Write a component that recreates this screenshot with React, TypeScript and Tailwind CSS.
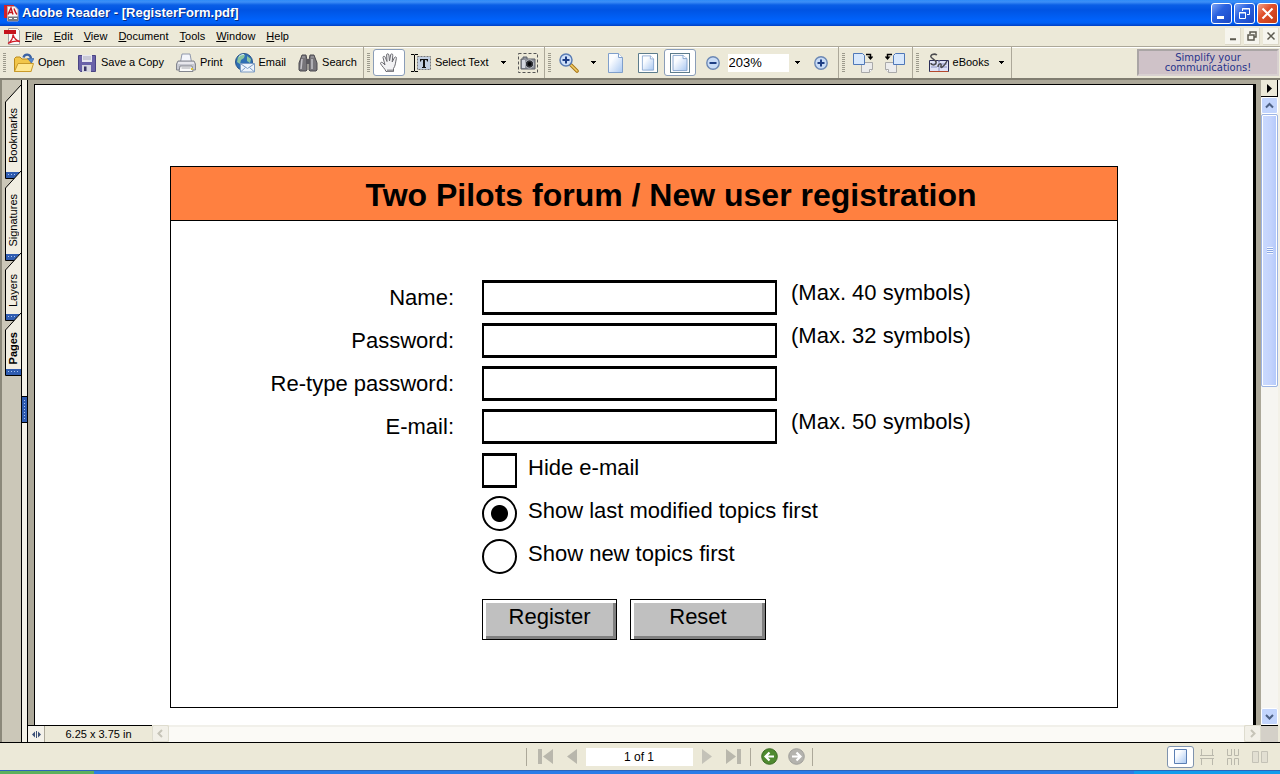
import React, { useState } from 'react';
import clsx from 'clsx';

const Gripper = () => (
  <span className="w-[3px] h-5 shrink-0 bg-[repeating-linear-gradient(to_bottom,#9c9a8c_0_1px,#ece9d8_1px_2px)]" />
);

const Arrow = () => (
  <svg className="shrink-0" width="5" height="3" viewBox="0 0 5 3" shapeRendering="crispEdges">
    <path d="M0 0h5v1h-1v1h-1v1h-1v-1h-1v-1h-1z" fill="#000" />
  </svg>
);

const AppIcon = () => (
  <svg width="16" height="18" viewBox="0 0 16 18">
    <path d="M1 1h10v13H1z" fill="#d2222a" />
    <path d="M4.500 2.500H12l3 3V17H4.500z" fill="#f8f6f6" stroke="#c4a8a8" />
    <path d="M5 10.500 8 4l2 6.500M6 8.500h3.500M11 4.500c1 2 1 4 3 6" fill="none" stroke="#c8161d" strokeWidth="1.400" />
    <path d="M5 12.500h10V17H5z" fill="#77797f" />
    <path d="M6 14.500h3M11 14.500h3" stroke="#fff" />
  </svg>
);

const PdfIcon = () => (
  <svg width="17" height="17" viewBox="0 0 17 17">
    <path d="M4.500.5h9l2 2v14h-11z" fill="#fbfbfb" stroke="#a5a5a5" />
    <path d="M0 2h12v4H0z" fill="#c5131b" />
    <path d="M4 15.500c3-2 5-5 5-9 1 4 3 6 7 7-4-1-8 0-12 2z" fill="none" stroke="#d0202a" strokeWidth="1.300" />
  </svg>
);

const OpenIcon = () => (
  <svg width="20" height="20" viewBox="0 0 20 20">
    <path d="M.5 5.500 2 4h4l2 2h9v12.500H.5z" fill="#f2c64a" stroke="#b98a1c" />
    <path d="M4 10.500h15.500l-2.500 8H.5z" fill="#ffe791" stroke="#c99a2a" />
    <path d="M9.500 4.500c1-4 7-4 7.500 1" fill="none" stroke="#3a62a4" strokeWidth="2.400" />
    <path d="M13.500 5.500h6.500l-2.500 4.500z" fill="#4f86cf" stroke="#3a62a4" strokeWidth=".6" />
  </svg>
);

const SaveIcon = () => (
  <svg width="20" height="20" viewBox="0 0 20 20">
    <path d="M1.500 2.500h17v16h-15l-2-2z" fill="#6a62a8" stroke="#4a4484" />
    <path d="M5 2h10v7H5z" fill="#e8e8f0" />
    <path d="M6 4h8M6 6h8" stroke="#a8a8bc" />
    <path d="M5 12h9v7H5z" fill="#d6d6e0" />
    <path d="M7 13.500h2.500V18H7z" fill="#3a3668" />
  </svg>
);

const PrintIcon = () => (
  <svg width="20" height="20" viewBox="0 0 20 20">
    <path d="M6 1h8l1.500 8h-11z" fill="#f4f6fc" stroke="#9098ac" />
    <path d="M2 8h16l1.500 3v6H.5v-6z" fill="#c6c8d0" stroke="#84868e" />
    <path d="M2 10h16" stroke="#f2f2f6" strokeWidth="1.500" />
    <path d="M4 13h12l1 5.500H3z" fill="#fafafa" stroke="#84868e" />
    <path d="M5.500 15h9" stroke="#a6a8ae" />
    <path d="M15 15h2v2h-2z" fill="#d9c43a" />
  </svg>
);

const EmailIcon = () => (
  <svg width="20" height="20" viewBox="0 0 20 20">
    <circle cx="9" cy="9" r="8.500" fill="#2f6fb4" stroke="#28548a" />
    <path d="M3 4c2-2 5-3 7-2l-1 3-3 2-1 4-3-2zM12 3l4 3-1 4-3-2z" fill="#8cc4a0" />
    <path d="M4 3.500c2-2 4-2 5-2" stroke="#d6ecfa" fill="none" />
    <path d="M5.500 10.500h14v8.500h-14z" fill="#eef4fc" stroke="#7c9cc4" />
    <path d="m6 11 6.500 4.500L19 11M6 18.500l4.500-4M19 18.500l-4.500-4" fill="none" stroke="#7c9cc4" />
  </svg>
);

const SearchIcon = () => (
  <svg width="20" height="20" viewBox="0 0 20 20">
    <path d="M4 2h4l1 5v10l-1 1H2l-1-1v-7z" fill="#77757a" stroke="#4c4a50" />
    <path d="M16 2h-4l-1 5v10l1 1h6l1-1v-7z" fill="#77757a" stroke="#4c4a50" />
    <path d="M8 6h4v5H8z" fill="#5a585e" />
    <path d="M4 6 3 16M14 6v10" stroke="#c4c2c8" strokeWidth="1.500" />
    <path d="M4 4h3M13 4h3" stroke="#a8a6ac" />
  </svg>
);

const HandIcon = () => (
  <svg width="20" height="21" viewBox="0 0 20 21">
    <path
      d="M7 19.500c-1-3-4-5-5.500-8 0-1.500 1.500-1.500 2.500-.5l2 2L4 5.500c0-1.500 1.700-1.800 2.200-.3L8 9.500 7.600 3c0-1.600 2-1.700 2.300 0l.6 6 1.200-6.300c.4-1.400 2.200-1 2.100.5L13.200 10l2.300-4.500c.8-1.200 2.200-.5 1.900.8C16.500 10 16.500 14 14.500 16.500v3z"
      fill="#f2f2f4"
      stroke="#6a6a70"
    />
    <path d="M8 18.500h6" stroke="#9a9a9e" strokeWidth="2" />
  </svg>
);

const SelectTextIcon = () => (
  <svg width="20" height="20" viewBox="0 0 20 20">
    <path d="M6.500 3.500h13v13h-13z" fill="#c3d0e2" stroke="#777" strokeDasharray="2 1" />
    <path d="M0 1.500h3l.5.5.5-.5h3M0 18.500h3l.5-.5.500.5h3M3.500 2v16" fill="none" stroke="#000" />
    <path d="M9 6h8v2.500h-1L15.500 7H14v7h1v1h-4v-1h1V7h-1.500L10 8.500H9z" fill="#111" />
  </svg>
);

const CameraIcon = () => (
  <svg width="20" height="20" viewBox="0 0 20 20">
    <path d="M.5.5h19v19H.5z" fill="none" stroke="#555" strokeDasharray="3 2" />
    <path d="M3 6h2V4h4v2h8v10H3z" fill="#8e929c" stroke="#5c6068" />
    <path d="M4 7h3v8H4z" fill="#d4d8e0" />
    <circle cx="11.500" cy="11" r="4.200" fill="#33363c" stroke="#c2c6ce" />
    <circle cx="11.500" cy="11" r="2" fill="#06070a" />
  </svg>
);

const ZoomToolIcon = () => (
  <svg width="20" height="20" viewBox="0 0 20 20">
    <path d="m12 12 6 6" stroke="#a87414" strokeWidth="3.600" strokeLinecap="round" />
    <path d="m12 12 6 6" stroke="#f2cf6a" strokeWidth="1.600" strokeLinecap="round" />
    <circle cx="7" cy="7" r="6" fill="#cfe0f8" stroke="#5a7cb4" strokeWidth="1.500" />
    <path d="M3.500 7h7M7 3.500v7" stroke="#1c3c84" strokeWidth="2" />
  </svg>
);

const PageShape = () => (
  <>
    <path d="M.5.5h10l4 4v15H.5z" fill="url(#sheet)" stroke="#7f9fcb" />
    <path d="M10.500.5v4h4" fill="#fff" stroke="#7f9fcb" />
  </>
);

const ActualSizeIcon = () => (
  <svg width="16" height="20" viewBox="0 0 16 20">
    <defs>
      <linearGradient id="sheet" x1="0" y1="0" x2="1" y2="1">
        <stop offset="0.300" stopColor="#fafcff" />
        <stop offset="1" stopColor="#a9c8f2" />
      </linearGradient>
    </defs>
    <PageShape />
  </svg>
);

const FitPageIcon = () => (
  <svg width="20" height="20" viewBox="0 0 20 20">
    <path d="M.5.5h19v19H.5z" fill="#fff" stroke="#5c7c8c" />
    <g transform="translate(4 2.500) scale(.8 .75)">
      <PageShape />
    </g>
  </svg>
);

const FitWidthIcon = () => (
  <svg width="20" height="20" viewBox="0 0 20 20">
    <path d="M.5 0v20M19.500 0v20M0 .5h20M0 19.500h20" stroke="#5c7c8c" />
    <g transform="translate(2.500 2) scale(1 .8)">
      <PageShape />
    </g>
  </svg>
);

const RoundIcon = ({ plus }: { plus?: boolean }) => (
  <svg width="14" height="14" viewBox="0 0 14 14">
    <circle cx="7" cy="7" r="6.200" fill="#c9dcf6" stroke="#6c88b4" strokeWidth="1.400" />
    <path d={plus ? 'M3.500 7h7M7 3.500v7' : 'M3.500 7h7'} stroke="#1f3f84" strokeWidth="2" />
  </svg>
);

const RotateIcon = ({ flip }: { flip?: boolean }) => (
  <svg width="20" height="20" viewBox="0 0 20 20">
    <g transform={flip ? 'translate(20 0) scale(-1 1)' : undefined}>
      <path d="M8.500 9.500h11v7l-3 3h-8z" fill="#ececec" stroke="#a9a9a9" />
      <path d="M16.500 19.500v-3h3" fill="#fff" stroke="#a9a9a9" />
      <path d="M.5.500h9l2 2v9H.5z" fill="#d8e8fc" stroke="#4f78b8" />
      <path d="M13 1.500h4.500V4" fill="none" stroke="#000" strokeWidth="1.500" />
      <path d="M14.500 3.500h6l-3 3.500z" fill="#000" />
    </g>
  </svg>
);

const EbooksIcon = () => (
  <svg width="20" height="20" viewBox="0 0 20 20">
    <path d="M.5 7.500h9l.5 1 .5-1h9v11H.5z" fill="#dfe2f6" stroke="#2c2e58" />
    <path d="M10 8v10M2 11h6M12 11h6M2 14h6M12 14h6" stroke="#8a92c4" />
    <path d="M1 18.500h18" stroke="#b4482c" />
    <path d="M8 2C5 0 1 2 2 4s6 3 5 6-5 2-5 0M9 14c0-4 4-4 3-1s3 1 6-5" fill="none" stroke="#4c4c50" strokeWidth="1.500" />
  </svg>
);

interface ToolButtonProps {
  label?: string;
  title?: string;
  active?: boolean;
  className?: string;
  children: React.ReactNode;
}

const ToolButton: React.FC<ToolButtonProps> = ({ label, title, active, className, children }) => (
  <button
    type="button"
    aria-label={label ? undefined : title}
    className={clsx(
      'flex items-center gap-1 shrink-0 whitespace-nowrap',
      active && 'w-8 h-[27px] justify-center rounded-[3px] border border-[#8a9db8] bg-white',
      className
    )}
  >
    {children}
    {label}
  </button>
);

const ToolGroup = ({ className, children }: { className?: string; children: React.ReactNode }) => (
  <div className={clsx('flex items-center shrink-0 pl-[3px] border-r border-[#aca899]', className)}>
    <Gripper />
    {children}
  </div>
);

const Toolbar = () => (
  <div className="flex h-8 border-t border-[#aca899] bg-[#ece9d8] shadow-[inset_0_1px_#fff]">
    <ToolGroup className="pr-[6px]">
      <div className="flex items-center gap-3 pl-2">
        <ToolButton label="Open"><OpenIcon /></ToolButton>
        <ToolButton label="Save a Copy"><SaveIcon /></ToolButton>
        <ToolButton label="Print"><PrintIcon /></ToolButton>
        <ToolButton label="Email"><EmailIcon /></ToolButton>
        <ToolButton label="Search"><SearchIcon /></ToolButton>
      </div>
    </ToolGroup>
    <ToolGroup className="pr-[6px]">
      <ToolButton title="Hand tool" active className="ml-[3px]"><HandIcon /></ToolButton>
      <ToolButton label="Select Text" className="ml-[6px]"><SelectTextIcon /></ToolButton>
      <ToolButton title="Selection tools" className="ml-3"><Arrow /></ToolButton>
      <ToolButton title="Snapshot" className="ml-3"><CameraIcon /></ToolButton>
    </ToolGroup>
    <ToolGroup className="pr-[10px]">
      <ToolButton title="Zoom in tool" className="ml-2"><ZoomToolIcon /></ToolButton>
      <ToolButton title="Zoom tools" className="ml-3"><Arrow /></ToolButton>
      <ToolButton title="Actual size" className="ml-3"><ActualSizeIcon /></ToolButton>
      <ToolButton title="Fit page" className="ml-[14px]"><FitPageIcon /></ToolButton>
      <ToolButton title="Fit width" active className="ml-[6px]"><FitWidthIcon /></ToolButton>
      <ToolButton title="Zoom out" className="ml-[10px]"><RoundIcon /></ToolButton>
      <select
        aria-label="Zoom level"
        defaultValue="203"
        className="ml-2 w-[61px] h-[18px] pl-px appearance-none bg-white text-[13px] leading-[18px]"
      >
        <option value="100">100%</option>
        <option value="203">203%</option>
        <option value="400">400%</option>
      </select>
      <ToolButton title="Zoom presets" className="ml-[6px]"><Arrow /></ToolButton>
      <ToolButton title="Zoom in" className="ml-[14px]"><RoundIcon plus /></ToolButton>
    </ToolGroup>
    <ToolGroup className="pr-[7px]">
      <ToolButton title="Rotate clockwise" className="ml-2"><RotateIcon /></ToolButton>
      <ToolButton title="Rotate counterclockwise" className="ml-3"><RotateIcon flip /></ToolButton>
    </ToolGroup>
    <ToolGroup className="pr-[7px]">
      <ToolButton label="eBooks" className="ml-[10px]"><EbooksIcon /></ToolButton>
      <ToolButton title="eBooks menu" className="ml-[10px]"><Arrow /></ToolButton>
    </ToolGroup>
    <a
      href="#offer"
      className="ml-auto mt-[2px] mb-[2px] mr-[1px] w-[142px] flex items-center justify-center text-center border-2 border-[#aaa5a5] border-b-[#d8d0d0] border-r-[#d8d0d0] bg-[#cfc2c8] text-[#27348b] text-[10px] leading-[10px] font-['DejaVu_Sans',sans-serif]"
    >
      Simplify your<br />communications!
    </a>
  </div>
);

const WindowButton = ({ title, danger, children }: { title: string; danger?: boolean; children: React.ReactNode }) => (
  <button
    type="button"
    aria-label={title}
    className={clsx(
      'size-[21px] flex items-center justify-center rounded-[3px] border border-white',
      danger
        ? 'bg-[linear-gradient(135deg,#f0a088,#e0502c_40%,#c03a14)]'
        : 'bg-[linear-gradient(135deg,#7ea4f4,#2a62e0_40%,#1c48c4)]'
    )}
  >
    {children}
  </button>
);

const TitleBar = () => (
  <header className="flex items-center h-[26px] pl-[3px] pr-[2px] bg-[linear-gradient(to_bottom,#2f8cf8_0,#3c8ef6_2px,#0a5fe6_5px,#0054e3_10px,#0062fb_20px,#0060f4_23px,#003fc4_26px)]">
    <AppIcon />
    <h1 className="flex-1 ml-[3px] text-[13px] font-bold text-white [text-shadow:1px_1px_#0a2c80] font-['Liberation_Sans',sans-serif]">
      Adobe Reader - [RegisterForm.pdf]
    </h1>
    <div className="flex gap-[2px]">
      <WindowButton title="Minimize">
        <svg width="13" height="13" viewBox="0 0 13 13"><path d="M2 9h7v3H2z" fill="#fff" /></svg>
      </WindowButton>
      <WindowButton title="Restore">
        <svg width="13" height="13" viewBox="0 0 13 13" fill="none" stroke="#fff">
          <path d="M4.500 4V1.500h7v6H9M4 2h8M1.500 5.500h6v6h-6zM1 6h7" />
        </svg>
      </WindowButton>
      <WindowButton title="Close" danger>
        <svg width="13" height="13" viewBox="0 0 13 13"><path d="m1.500 1.500 10 10m0-10-10 10" stroke="#fff" strokeWidth="2" /></svg>
      </WindowButton>
    </div>
  </header>
);

const MENUS = ['File', 'Edit', 'View', 'Document', 'Tools', 'Window', 'Help'];

const DocButton = ({ title, path }: { title: string; path: string }) => (
  <button type="button" aria-label={title} className="w-4 h-[17px] flex items-center justify-center bg-[#f6f5ee] border-r border-b border-[#dcd8c8]">
    <svg width="10" height="10" viewBox="0 0 10 10" fill="none" stroke="#5c5a50"><path d={path} strokeWidth="1.500" /></svg>
  </button>
);

const MenuBar = () => (
  <nav className="flex items-center h-5 pl-1 pr-[1px] bg-[#ece9d8]">
    <PdfIcon />
    <div className="flex flex-1 gap-[11px] ml-1">
      {MENUS.map((name) => (
        <button key={name} type="button" className="leading-4">
          <span className="underline">{name[0]}</span>
          {name.slice(1)}
        </button>
      ))}
    </div>
    <div className="flex gap-[3px]">
      <DocButton title="Minimize document" path="M2 8h6M2 8.500h6" />
      <DocButton title="Restore document" path="M3 3V1h6v5H7M1 4h6v5H1z" />
      <DocButton title="Close document" path="m1.500 1.500 7 7m0-7-7 7" />
    </div>
  </nav>
);

const TABS = [
  { name: 'Bookmarks', height: 94 },
  { name: 'Signatures', height: 90 },
  { name: 'Layers', height: 68 },
  { name: 'Pages', height: 63 },
];

const SidePanel = ({ current, onSelect }: { current: string; onSelect: (name: string) => void }) => (
  <aside className="flex shrink-0">
    <div className="w-[21px] pl-[3px] pt-[5px] border-l-2 border-[#8b887a] bg-[#cbc7b8]">
      {TABS.map(({ name, height }, i) => (
        <button
          key={name}
          type="button"
          onClick={() => onSelect(name)}
          style={{ height }}
          className={clsx(
            'relative flex items-center justify-center w-4 pt-2',
            i > 0 && '-mt-2',
            name === current && 'font-bold'
          )}
        >
          <svg className="absolute inset-0" width="16" height={height} viewBox={`0 0 16 ${height}`}>
            <path d={`M16 0 .5 17v${height - 17.5}H16z`} fill="#f1eee2" />
            <path d={`M1 ${height - 7}h15v6H1z`} fill="#2f5cb0" />
            <path d={`M3 ${height - 4.5}h12`} stroke="#a9c4f4" strokeDasharray="1 2" />
            <path d={`M16 0 .5 17v${height - 17.5}H16`} fill="none" stroke="#000" />
          </svg>
          <span className="relative rotate-180 [writing-mode:vertical-rl] text-[11px] leading-4">{name}</span>
        </button>
      ))}
    </div>
    <div className="w-[7px] pt-[316px] border-l border-r border-black bg-[#f4f2e8]">
      <div className="h-[27px] border-y border-black bg-[#2f5cb0] flex justify-center py-[3px]">
        <span className="w-px bg-[repeating-linear-gradient(to_bottom,#a9c4f4_0_1px,#2f5cb0_1px_3px)]" />
      </div>
    </div>
  </aside>
);

interface FieldProps {
  id: string;
  label: string;
  hint?: string;
  type?: string;
}

const Field: React.FC<FieldProps> = ({ id, label, hint, type = 'text' }) => (
  <div className="flex">
    <label htmlFor={id} className="w-[283px] mr-7 text-right leading-[35px]">{label}</label>
    <input id={id} type={type} className="w-[295px] h-[35px] px-2 border-x-2 border-y-[3px] border-black bg-white outline-none" />
    {hint && <span className="ml-[14px] leading-[26px]">{hint}</span>}
  </div>
);

const RegisterForm = () => {
  const [hideEmail, setHideEmail] = useState(false);
  const [order, setOrder] = useState('modified');

  const button =
    'h-[41px] pb-[6px] text-center bg-[#c0c0c0] border border-black shadow-[inset_3px_3px_#fff,inset_-3px_-3px_#808080]';

  return (
    <form
      onSubmit={(e) => e.preventDefault()}
      className="mx-[135px] mt-[81px] border border-black bg-white text-[22px] text-black"
    >
      <h2 className="h-[54px] pl-[54px] text-center text-[32px] leading-[56px] font-bold border-b border-black bg-[#ff8040]">
        Two Pilots forum / New user registration
      </h2>
      <div className="flex flex-col gap-2 pt-[59px]">
        <Field id="name" label="Name:" hint="(Max. 40 symbols)" />
        <Field id="password" label="Password:" hint="(Max. 32 symbols)" type="password" />
        <Field id="retype" label="Re-type password:" type="password" />
        <Field id="email" label="E-mail:" hint="(Max. 50 symbols)" />
      </div>
      <div className="flex flex-col gap-2 pt-[9px] pl-[311px]">
        <label className="flex gap-[11px] leading-[30px]">
          <input
            type="checkbox"
            checked={hideEmail}
            onChange={(e) => setHideEmail(e.target.checked)}
            className="appearance-none size-[35px] border-x-2 border-y-[3px] border-black bg-white checked:bg-[linear-gradient(45deg,#000,#000)] bg-clip-content p-[5px]"
          />
          Hide e-mail
        </label>
        {[
          ['modified', 'Show last modified topics first'],
          ['new', 'Show new topics first'],
        ].map(([value, text]) => (
          <label key={value} className="flex gap-[11px] leading-[30px]">
            <input
              type="radio"
              name="order"
              value={value}
              checked={order === value}
              onChange={() => setOrder(value)}
              className="appearance-none size-[35px] rounded-full border-2 border-black checked:bg-[radial-gradient(circle,#000_8px,#fff_9px)]"
            />
            {text}
          </label>
        ))}
      </div>
      <div className="flex gap-[13px] pt-[25px] pb-[67px] pl-[311px]">
        <button type="submit" className={clsx(button, 'w-[135px]')}>Register</button>
        <button type="reset" className={clsx(button, 'w-[136px]')}>Reset</button>
      </div>
    </form>
  );
};

const ScrollButton = ({ title, path, muted }: { title: string; path: string; muted?: boolean }) => (
  <button
    type="button"
    aria-label={title}
    className={clsx(
      'size-[17px] shrink-0 flex items-center justify-center rounded-[2px] border',
      muted ? 'border-[#dedccf] bg-[#f2f0e8] text-[#c6c4b8]' : 'border-white bg-[#c3d5fd] text-[#4d6185]'
    )}
  >
    <svg width="9" height="9" viewBox="0 0 9 9" fill="none" stroke="currentColor" strokeWidth="2"><path d={path} /></svg>
  </button>
);

const VerticalScroll = () => (
  <div className="w-[19px] shrink-0 pr-[2px] flex flex-col bg-[#f3f1e8]">
    <button type="button" aria-label="Document menu" className="h-[17px] w-[17px] shrink-0 flex items-center justify-center bg-[#ece9d8] border-r border-b border-black">
      <svg width="5" height="9" viewBox="0 0 5 9"><path d="M0 0v9l5-4.500z" fill="#000" /></svg>
    </button>
    <ScrollButton title="Scroll up" path="M1 6.500 4.500 3 8 6.500" />
    <div className="flex-1 bg-[#f6f5f1]">
      <div className="h-[273px] flex items-center justify-center rounded-[2px] border border-[#9cb4e4] shadow-[inset_0_0_0_1px_#fff] bg-[linear-gradient(to_right,#cbdafe,#c3d3fd_60%,#b3c8fa)]">
        <span className="w-[6px] h-[7px] bg-[repeating-linear-gradient(to_bottom,#f4f8ff_0_1px,#8ca8e4_1px_2px)]" />
      </div>
    </div>
    <ScrollButton title="Scroll down" path="M1 3 4.500 6.500 8 3" />
  </div>
);

const PaneFooter = () => (
  <div className="flex h-[17px] pr-[2px] bg-[#ece9d8]">
    <div className="w-[124px] flex items-center border-t border-black">
      <button type="button" aria-label="Resize" className="w-[17px] h-4 flex items-center justify-center bg-[#f4f2ea] border-r border-[#aca899]">
        <svg width="9" height="7" viewBox="0 0 9 7" fill="#3c5078"><path d="M4 0h1v7H4zM3 .5v6L0 3.500zM6 .5v6l3-3z" /></svg>
      </button>
      <span className="flex-1 text-center leading-4">6.25 x 3.75 in</span>
    </div>
    <ScrollButton title="Scroll left" path="M6 1 2.500 4.500 6 8" muted />
    <div className="flex-1 bg-[#fbfaf6] shadow-[inset_0_2px_#f1f0ea]" />
    <ScrollButton title="Scroll right" path="M3 1l3.500 3.500L3 8" muted />
    <div className="w-[17px] border-t border-black bg-[#d4d0c8]" />
  </div>
);

const NavButton = ({ title, className, children }: { title: string; className?: string; children: React.ReactNode }) => (
  <button type="button" aria-label={title} className={className}>{children}</button>
);

const Rule = () => <span className="w-px h-[18px] bg-[#aca899]" />;

const StatusBar = () => (
  <footer className="grid grid-cols-[1fr_auto_1fr] items-center h-[27px] pl-[58px] bg-[#ece9d8]">
    <div />
    <div className="flex items-center">
      <Rule />
      <NavButton title="First page" className="ml-[11px]">
        <svg width="16" height="15" viewBox="0 0 16 15" fill="#b9b7ac"><path d="M0 0h4v15H0zM15 0v15L5 7.500z" /></svg>
      </NavButton>
      <NavButton title="Previous page" className="ml-[13px]">
        <svg width="10" height="15" viewBox="0 0 10 15" fill="#b9b7ac"><path d="M10 0v15L0 7.500z" /></svg>
      </NavButton>
      <input
        aria-label="Page"
        defaultValue="1 of 1"
        className="mx-[9px] w-[107px] h-[18px] bg-white text-center text-xs outline-none"
      />
      <NavButton title="Next page">
        <svg width="10" height="15" viewBox="0 0 10 15" fill="#c4c2b8"><path d="M0 0v15l10-7.500z" /></svg>
      </NavButton>
      <NavButton title="Last page" className="ml-[13px]">
        <svg width="16" height="15" viewBox="0 0 16 15" fill="#b9b7ac"><path d="M12 0h4v15h-4zM1 0v15l10-7.500z" /></svg>
      </NavButton>
      <span className="w-[9px]" />
      <Rule />
      <NavButton title="Previous view" className="ml-[10px]">
        <svg width="17" height="17" viewBox="0 0 17 17">
          <circle cx="8.500" cy="8.500" r="7.800" fill="#4f8a30" stroke="#3a6a22" />
          <path d="M13 8.500H5M8.500 4.500l-4 4 4 4" fill="none" stroke="#fff" strokeWidth="2.200" />
        </svg>
      </NavButton>
      <NavButton title="Next view" className="ml-[10px] mr-[7px]">
        <svg width="17" height="17" viewBox="0 0 17 17">
          <circle cx="8.500" cy="8.500" r="7.800" fill="#b4b3ae" stroke="#a09f9a" />
          <path d="M4 8.500h8M8.500 4.500l4 4-4 4" fill="none" stroke="#fff" strokeWidth="2.200" />
        </svg>
      </NavButton>
      <Rule />
    </div>
    <div className="flex items-center justify-end gap-3 pr-3">
      <button type="button" aria-label="Single page" className="w-[27px] h-[22px] -mr-[6px] flex items-center justify-center rounded-[3px] border border-[#7f93ae] bg-white">
        <svg width="13" height="15" viewBox="0 0 13 15"><path d="M.5.5h12v14H.5z" fill="url(#sheet)" stroke="#5b7fb4" /></svg>
      </button>
      <button type="button" aria-label="Continuous">
        <svg width="14" height="16" viewBox="0 0 14 16" fill="none" stroke="#bab8ac"><path d="M1.500 0v6.500h11V0M1.500 16V9.500h11V16M0 6.500h14M0 9.500h14" /></svg>
      </button>
      <button type="button" aria-label="Continuous facing">
        <svg width="14" height="16" viewBox="0 0 14 16" fill="none" stroke="#bab8ac"><path d="M1.500 0v6.500h4V0M8.500 0v6.500h4V0M1.500 16V9.500h4V16M8.500 16V9.500h4V16" /></svg>
      </button>
      <button type="button" aria-label="Facing">
        <svg width="16" height="12" viewBox="0 0 16 12" fill="#e2dfd2" stroke="#c4c2b6"><path d="M.5.5h6v11h-6zM9.500.5h6v11h-6z" /></svg>
      </button>
    </div>
  </footer>
);

const App = () => {
  const [tab, setTab] = useState('Pages');

  return (
    <div className="min-h-screen flex flex-col bg-[#ece9d8] text-black text-[11px] font-['Liberation_Sans',Arial,sans-serif]">
      <TitleBar />
      <MenuBar />
      <Toolbar />
      <main className="flex-1 flex border-t-2 border-b border-t-[#807d70] border-b-black">
        <SidePanel current={tab} onSelect={setTab} />
        <div className="flex-1 flex flex-col min-w-0">
          <div className="flex-1 flex">
            <div className="flex-1 flex pl-[6px] pr-[5px] pt-[4px] bg-[#aca899]">
              <div className="flex-1 border-t border-l border-black border-r-[3px] bg-white">
                <RegisterForm />
              </div>
            </div>
            <VerticalScroll />
          </div>
          <PaneFooter />
        </div>
      </main>
      <StatusBar />
      <div className="flex h-1 border-t border-[#2c64b8]">
        <span className="w-[94px] bg-[#5cb05c]" />
        <span className="flex-1 bg-[#2a7ce8]" />
        <span className="w-[146px] bg-[#129cec]" />
      </div>
    </div>
  );
};

export default App;
